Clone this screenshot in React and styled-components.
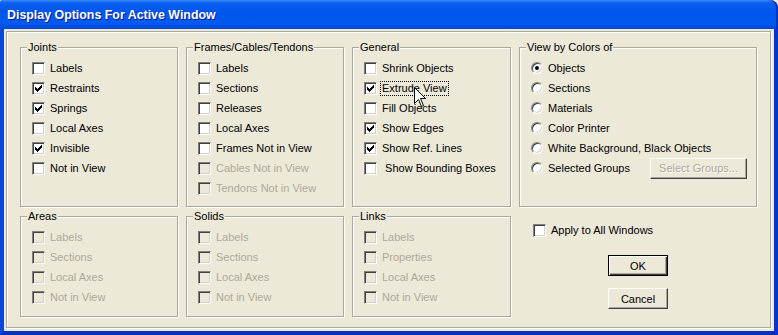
import React from "react";
import styled, { createGlobalStyle } from "styled-components";

const GlobalStyle = createGlobalStyle`
    body {
        margin: 0;
        background: #ece9d8;
        font-family: "Liberation Sans", Arial, sans-serif;
        font-size: 11px;
    }
`;

const joints = [
    { label: "Labels", checked: false },
    { label: "Restraints", checked: true },
    { label: "Springs", checked: true },
    { label: "Local Axes", checked: false },
    { label: "Invisible", checked: true },
    { label: "Not in View", checked: false },
];

const frames = [
    { label: "Labels" },
    { label: "Sections" },
    { label: "Releases" },
    { label: "Local Axes" },
    { label: "Frames Not in View" },
    { label: "Cables Not in View", disabled: true },
    { label: "Tendons Not in View", disabled: true },
];

const general = [
    { label: "Shrink Objects" },
    { label: "Extrude View", checked: true, focused: true },
    { label: "Fill Objects" },
    { label: "Show Edges", checked: true },
    { label: "Show Ref. Lines", checked: true },
    { label: "\u00a0Show Bounding Boxes" },
];

const colorModes = [
    "Objects",
    "Sections",
    "Materials",
    "Color Printer",
    "White Background, Black Objects",
];

const areas = ["Labels", "Sections", "Local Axes", "Not in View"];
const solids = ["Labels", "Sections", "Local Axes", "Not in View"];
const links = ["Labels", "Properties", "Local Axes", "Not in View"];

const Check = ({ checked, disabled }) => (
    <Box $disabled={disabled}>
        {checked && (
            <svg width="7" height="7" viewBox="0 0 7 7" shapeRendering="crispEdges">
                <path
                    d="M6 0h1v3h-1v1h-1v1h-1v1h-1v1h-1v-1h-1v-1h-1v-3h1v1h1v1h1v-1h1v-1h1z"
                    fill="#000"
                />
            </svg>
        )}
    </Box>
);

const Cursor = () => (
    <CursorArt width="13" height="21" viewBox="0 0 13 21">
        <path
            d="M0.5 0.5 L0.5 16.5 L4.5 12.5 L7.5 19.5 L9.5 18.5 L6.5 11.5 L11.5 11.5 Z"
            fill="#fff"
            stroke="#000"
            strokeWidth="1"
        />
    </CursorArt>
);

const Group = ({ title, children }) => (
    <GroupBox>
        <Legend>{title}</Legend>
        <OptionList>{children}</OptionList>
    </GroupBox>
);

const CheckOption = ({ label, checked, disabled, focused }) => (
    <Row>
        <Check checked={checked} disabled={disabled} />
        <Label $disabled={disabled} $focused={focused}>{label}</Label>
        {focused && <Cursor />}
    </Row>
);

export default function App() {
    return (
        <>
            <GlobalStyle />
            <Window>
                <TitleBar>
                    <Title>Display Options For Active Window</Title>
                </TitleBar>
                <Frame>
                    <Panel>
                        <Group title="Joints">
                            {joints.map((o) => (
                                <CheckOption key={o.label} {...o} />
                            ))}
                        </Group>
                        <Group title="Frames/Cables/Tendons">
                            {frames.map((o) => (
                                <CheckOption key={o.label} {...o} />
                            ))}
                        </Group>
                        <Group title="General">
                            {general.map((o) => (
                                <CheckOption key={o.label} {...o} />
                            ))}
                        </Group>
                        <Group title="View by Colors of">
                            {colorModes.map((mode, i) => (
                                <Row key={mode}>
                                    <Radio $selected={i === 0} />
                                    <Label>{mode}</Label>
                                </Row>
                            ))}
                            <Row>
                                <Radio />
                                <Label>Selected Groups</Label>
                                <SmallButton disabled>Select Groups...</SmallButton>
                            </Row>
                        </Group>

                        <Group title="Areas">
                            {areas.map((l) => (
                                <CheckOption key={l} label={l} disabled />
                            ))}
                        </Group>
                        <Group title="Solids">
                            {solids.map((l) => (
                                <CheckOption key={l} label={l} disabled />
                            ))}
                        </Group>
                        <Group title="Links">
                            {links.map((l) => (
                                <CheckOption key={l} label={l} disabled />
                            ))}
                        </Group>
                        <Actions>
                            <ApplyRow>
                                <Check />
                                <Label>Apply to All Windows</Label>
                            </ApplyRow>
                            <PushButton $default>OK</PushButton>
                            <PushButton>Cancel</PushButton>
                        </Actions>
                    </Panel>
                </Frame>
            </Window>
        </>
    );
}

const Window = styled.div`
    width: 778px;
    height: 335px;
    display: flex;
    flex-direction: column;
    background: #ece9d8;
    overflow: hidden;
`;

const TitleBar = styled.div`
    height: 29px;
    flex: none;
    display: flex;
    align-items: center;
    padding-left: 7px;
    border-top-right-radius: 8px;
    border-top-left-radius: 2px;
    background: linear-gradient(
        to bottom,
        #3b8cf5 0%,
        #0a5ef0 10%,
        #0055ea 45%,
        #005bf2 80%,
        #0045d4 100%
    );
    box-shadow: inset -2px 0 0 #0331c0;
`;

const Title = styled.span`
    color: #fff;
    font-family: "Liberation Sans", Arial, sans-serif;
    font-weight: bold;
    font-size: 12.4px;
    text-shadow: 1px 1px 0 #0a1d86;
`;

const Frame = styled.div`
    flex: 1;
    display: flex;
    padding: 2px 3px 3px 2px;
    border-left: 4px solid #0a47dc;
    border-right: 4px solid #0835c9;
    border-bottom: 4px solid #0632bf;
    background: #ece9d8;
`;

const Panel = styled.div`
    flex: 1;
    display: grid;
    grid-template-columns: 158px 158px 159px 238px;
    grid-template-rows: 160px 101px;
    column-gap: 8px;
    row-gap: 9px;
    align-content: start;
    padding: 15px 0 0 13px;
    border: 1px solid #aca899;
    box-shadow: inset 1px 1px 0 #fff, 1px 1px 0 #fff;
`;

const GroupBox = styled.div`
    position: relative;
    border: 1px solid #aca899;
    box-shadow: inset 1px 1px 0 #fff, 1px 1px 0 #fff;
`;

const Legend = styled.span`
    position: absolute;
    top: -7px;
    left: 6px;
    padding: 0 1px;
    line-height: 13px;
    background: #ece9d8;
    color: #000;
`;

const OptionList = styled.div`
    display: flex;
    flex-direction: column;
    padding: 10px 9px 0 11px;
`;

const Row = styled.div`
    position: relative;
    height: 20px;
    flex: none;
    display: flex;
    align-items: center;
    gap: 4px;
`;

const Box = styled.span`
    box-sizing: border-box;
    width: 13px;
    height: 13px;
    flex: none;
    display: flex;
    align-items: center;
    justify-content: center;
    border: 1px solid;
    border-color: #808080 #fff #fff #808080;
    box-shadow: inset 1px 1px 0 #404040, inset -1px -1px 0 #d4d0c8;
    background: ${(p) => (p.$disabled ? "#ece9d8" : "#fff")};
`;

const Radio = styled.span`
    position: relative;
    box-sizing: border-box;
    width: 12px;
    height: 12px;
    flex: none;
    border-radius: 50%;
    border: 1px solid;
    border-color: #808080 #fff #fff #808080;
    box-shadow: inset 1px 1px 0 #404040, inset -1px -1px 0 #d4d0c8;
    background: #fff;

    &::after {
        content: "";
        display: ${(p) => (p.$selected ? "block" : "none")};
        position: absolute;
        left: 3px;
        top: 3px;
        width: 4px;
        height: 4px;
        border-radius: 50%;
        background: #000;
    }
`;

const Label = styled.span`
    line-height: 13px;
    white-space: pre;
    color: ${(p) => (p.$disabled ? "#aca899" : "#000")};
    padding: 0 1px;
    outline: ${(p) => (p.$focused ? "1px dotted #000" : "none")};
`;

const CursorArt = styled.svg`
    position: absolute;
    left: 50px;
    top: 9px;
`;

const SmallButton = styled.button`
    margin-left: auto;
    width: 97px;
    height: 21px;
    padding: 0;
    font: inherit;
    color: #aca899;
    text-shadow: 1px 1px 0 #fff;
    background: #ece9d8;
    border: 1px solid;
    border-color: #fff #404040 #404040 #fff;
    box-shadow: inset -1px -1px 0 #aca899;
`;

const Actions = styled.div`
    display: flex;
    flex-direction: column;
    align-items: center;
    padding-top: 4px;
`;

const ApplyRow = styled(Row)`
    align-self: flex-start;
    padding-left: 14px;
    margin-bottom: 15px;
`;

const PushButton = styled.button`
    box-sizing: border-box;
    flex: none;
    width: 60px;
    height: 21px;
    padding: 0;
    margin-bottom: 12px;
    font: inherit;
    color: #000;
    background: #ece9d8;
    border: 1px solid;
    border-color: ${(p) => (p.$default ? "#000" : "#fff #404040 #404040 #fff")};
    box-shadow: ${(p) =>
        p.$default
            ? "inset 1px 1px 0 #fff, inset -1px -1px 0 #404040, inset -2px -2px 0 #aca899"
            : "inset -1px -1px 0 #aca899"};

    &:last-child {
        margin-bottom: 0;
    }
`;
